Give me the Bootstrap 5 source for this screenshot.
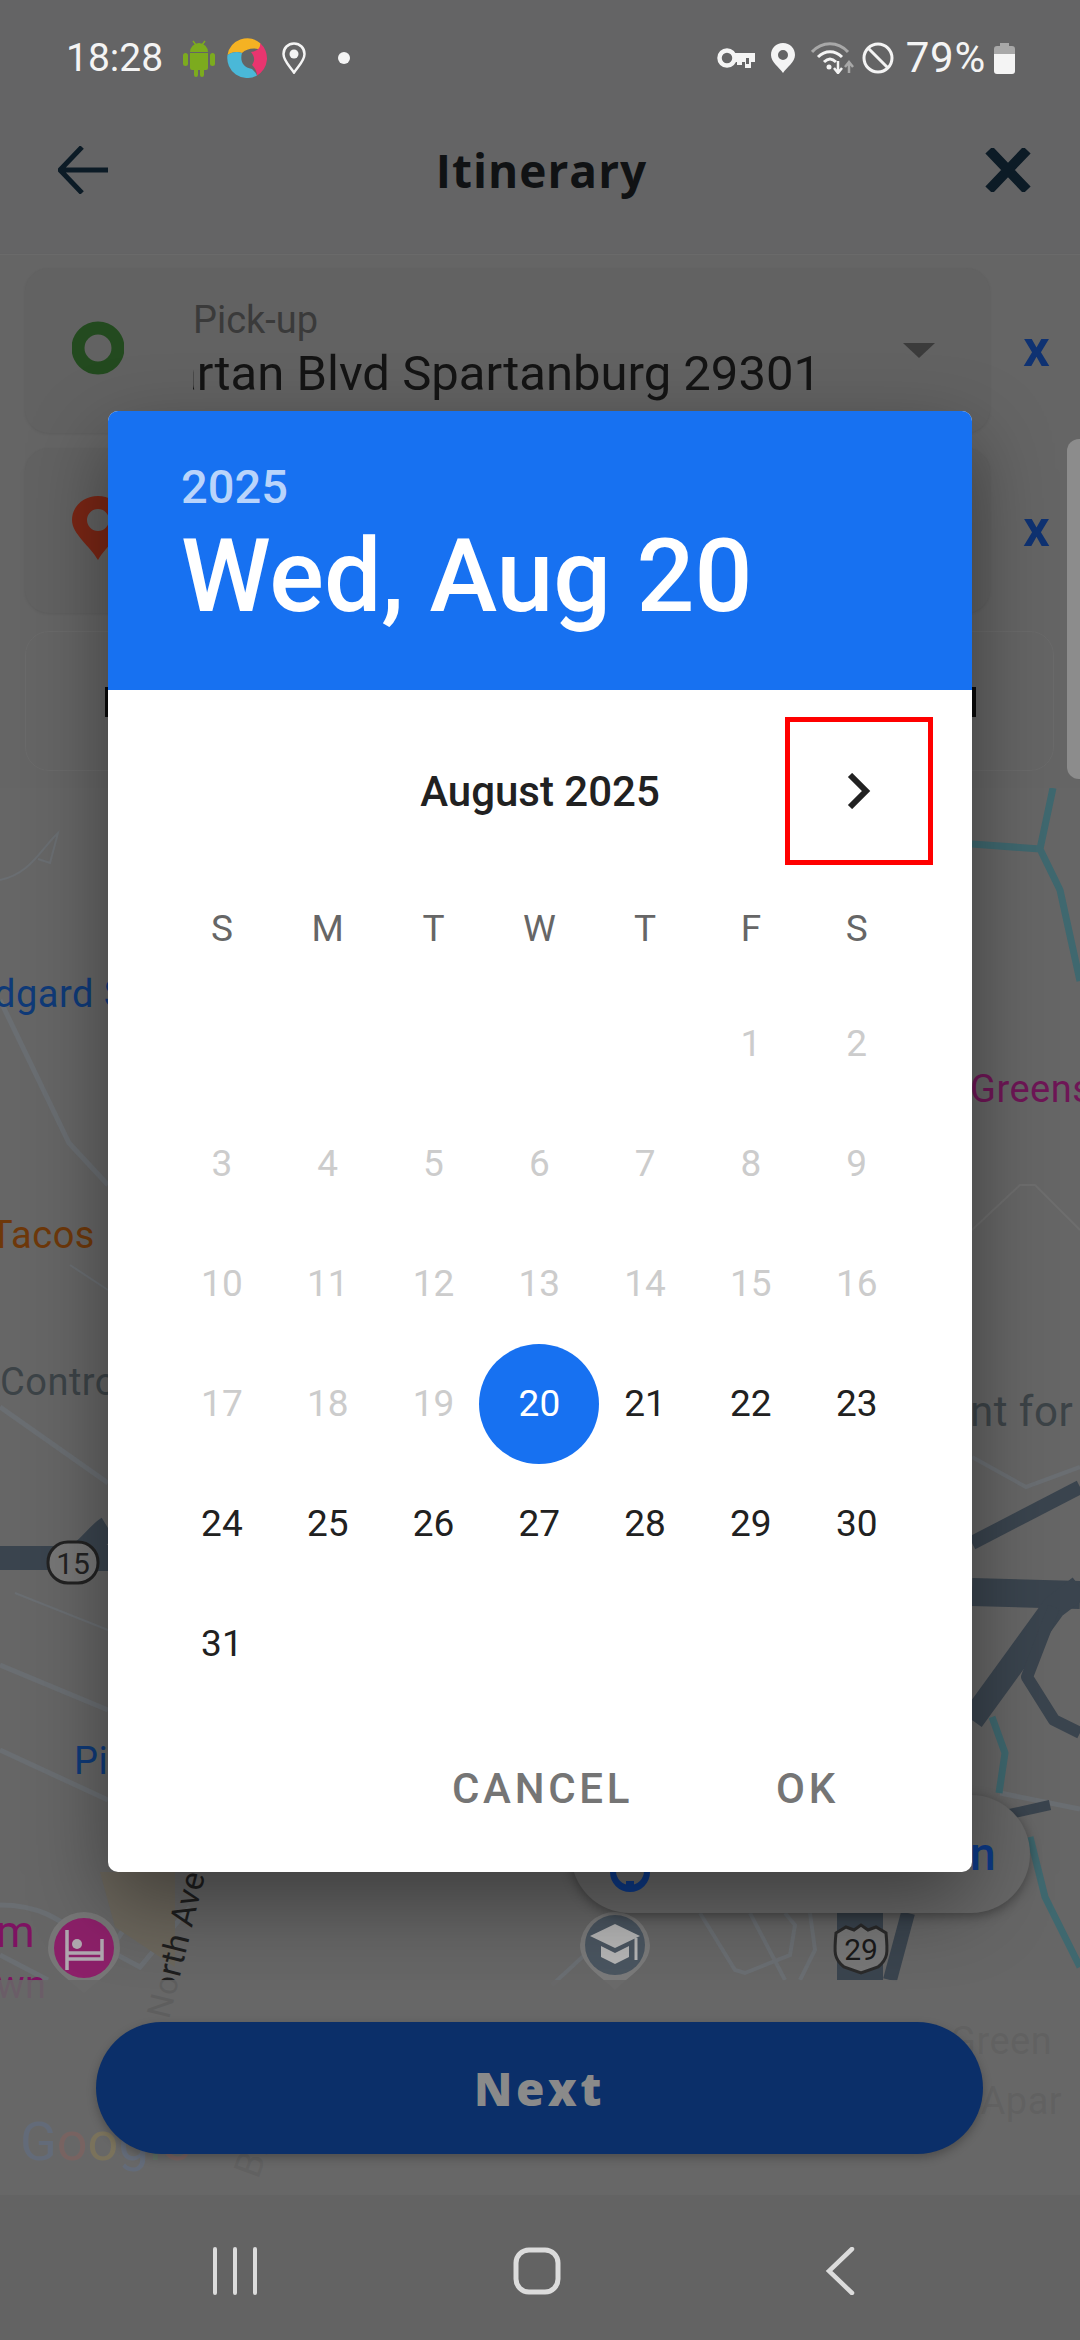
<!DOCTYPE html>
<html lang="en">
<head>
    <meta charset="UTF-8">
    <meta name="viewport" content="width=device-width, initial-scale=1.0">
    <title>Itinerary</title>
    <link href="https://cdn.jsdelivr.net/npm/bootstrap@5.3.0/dist/css/bootstrap.min.css" rel="stylesheet">
    <style>
        body {
            margin: 0;
            background-color: #646465;
            font-family: Roboto, "Liberation Sans", sans-serif;
        }
        .screen {
            width: 1080px;
            height: 2340px;
            overflow: hidden;
        }
        /* status bar */
        .status-bar {
            height: 116px;
            padding: 0 65px 0 66px;
            color: #f4f4f4;
            font-size: 39px;
            line-height: 1;
        }
        .status-pct { font-size: 42px; letter-spacing: 0.8px; margin-left: 12px; }
        /* toolbar */
        .tool-bar {
            height: 138px;
            padding: 0 49px 30px 58px;
        }
        .tool-title {
            font-family: "Open Sans", sans-serif;
            font-weight: 700;
            font-size: 46px;
            letter-spacing: 1px;
            color: #101214;
            line-height: 1;
            margin-right: 10px;
        }
        /* form panel */
        .form-panel {
            height: 534px;
            padding: 13px 0 0 25px;
            background-color: #656565;
            border-top: 1px solid #6a6a6a;
            box-shadow: 0 2px 3px rgba(0,0,0,.2);
        }
        .field-row { height: 165px; margin-bottom: 15px; }
        .field-box {
            width: 965px;
            height: 100%;
            background-color: #626262;
            border: 0;
            border-radius: 24px;
            box-shadow: 0 1px 3px rgba(0,0,0,.08);
            padding-left: 47px;
        }
        .field-icon { width: 52px; flex: none; margin: 0 69px 6px 0; }
        .field-body { width: 628px; margin-top: -2px; }
        .field-label { font-size: 38px; line-height: 46px; margin-bottom: 3px; color: #3a3a3a; }
        .field-value {
            font-size: 49px;
            line-height: 56px;
            color: #141414;
            white-space: nowrap;
            overflow: hidden;
        }
        .field-caret {
            width: 0;
            height: 0;
            margin: 0 0 0 82px;
            border-left: 16px solid transparent;
            border-right: 16px solid transparent;
            border-top: 15px solid #3b3b3b;
        }
        .field-clear {
            font-family: "Open Sans", sans-serif;
            font-weight: 700;
            font-size: 50px;
            line-height: 1;
            color: #0f3272;
            margin: 0 0 8px 32px;
            transform: scaleX(.9);
        }
        .date-box {
            width: 1029px;
            height: 140px;
            margin-top: 18px;
            background-color: #656565;
            border: 1px solid #6a6a6a;
            border-radius: 24px;
            padding: 55px 0 0 79px;
        }
        .date-line { width: 871px; height: 30px; background-color: #0a0a0a; }
        .side-tab {
            right: 0;
            top: 184px;
            width: 13px;
            height: 340px;
            background-color: #8c8c8c;
            border-radius: 12px 0 0 12px;
        }
        /* map */
        .map-area { height: 1407px; background-color: #666; }
        .map-svg { left: 0; top: 0; }
        .map-svg text { font-family: Roboto, sans-serif; font-size: 38px; letter-spacing: .5px; }
        .next-panel {
            height: 215px;
            padding: 42px 97px 0 96px;
            background-color: rgba(104,104,104,.88);
        }
        .btn.next-btn {
            height: 132px;
            padding: 0;
            border: 0;
            border-radius: 66px;
            background-color: #0b2f69;
            color: #8a8a8a;
            font-family: "Open Sans", sans-serif;
            font-weight: 800;
            font-size: 46px;
            letter-spacing: 3.5px;
            box-shadow: 0 4px 10px rgba(0,0,0,.25);
        }
        .nav-bar { height: 145px; background-color: #636363; }
        .nav-icon { top: 52px; }
        /* date picker */
        .date-dialog {
            left: 108px;
            top: 411px;
            width: 864px;
            height: 1461px;
            border: 0;
            border-radius: 10px;
            overflow: hidden;
            box-shadow: 0 30px 80px rgba(0,0,0,.4);
        }
        .date-head {
            height: 279px;
            padding: 48px 0 0 73px;
            background-color: #1771f1;
            color: #fff;
        }
        .date-year { font-size: 47px; font-weight: 500; line-height: 56px; color: #b9d4fb; }
        .date-full { font-size: 102px; font-weight: 500; line-height: 122px; }
        .month-row { height: 176px; padding: 27px 39px 0 0; }
        .month-name { top: 349px; font-size: 42px; font-weight: 500; color: #212121; }
        .month-next {
            width: 148px;
            height: 148px;
            border: 5px solid #f00;
        }
        .cal-grid {
            grid-template-columns: repeat(7, 105.8px);
            grid-auto-rows: 120px;
            margin-left: 61px;
            font-size: 37px;
            color: #212121;
            text-align: center;
        }
        .cal-grid span { line-height: 120px; }
        .cal-week { height: 80px; margin-top: 23px; margin-bottom: 15px; font-size: 37px; color: #666; }
        .cal-week span { line-height: 80px; }
        .cal-off { color: #ccc; }
        .cal-on {
            display: block;
            width: 120px;
            margin-left: -7px;
            background-color: #1771f1;
            border-radius: 50%;
            color: #fff;
        }
        .dialog-actions { padding: 0 0 0 344px; margin-top: 53px; }
        .btn.dialog-btn {
            padding: 0;
            border: 0;
            font-size: 42px;
            font-weight: 500;
            letter-spacing: 3.7px;
            color: #757575;
        }
    </style>
</head>
<body>
<div class="screen position-relative d-flex flex-column">

    <!-- status bar -->
    <div class="status-bar d-flex align-items-center justify-content-between flex-shrink-0">
        <div class="d-flex align-items-center">
            <span>18:28</span>
            <svg width="32" height="37" viewBox="0 0 32 37" style="margin-left:20px">
                <path d="M7 12a9 9 0 0 1 18 0zM7 13h18v15a2 2 0 0 1-2 2h-2v5a2 2 0 0 1-4 0v-5h-2v5a2 2 0 0 1-4 0v-5H9a2 2 0 0 1-2-2z" fill="#7cab1e"/>
                <rect x="0" y="13" width="5" height="13" rx="2.5" fill="#7cab1e"/>
                <rect x="27" y="13" width="5" height="13" rx="2.5" fill="#7cab1e"/>
                <path d="M10 1l3 4M22 1l-3 4" stroke="#7cab1e" stroke-width="1.5"/>
            </svg>
            <svg width="40" height="40" viewBox="0 0 40 40" style="margin-left:12px">
                <path d="M0.5 17A20 20 0 0 1 33 5C35 8 37 11 37 13C29 9 20 10 15 15C10 13 5 14 0.5 17z" fill="#f5b223"/>
                <path d="M33 5A20 20 0 0 1 30 37.5C30 33 27 29 25 27C28 23 28 19 24 14C30 13 34 10 33 5z" fill="#e8356f"/>
                <path d="M0.5 17C5 14 10 13 15 15C13 22 15 29 25 31C27 33 29 35 30 37.5A20 20 0 0 1 0.5 17z" fill="#4ab8d8"/>
            </svg>
            <svg width="24" height="32" viewBox="0 0 24 32" style="margin-left:15px">
                <path d="M12 1.5C6 1.5 1.5 6 1.5 12c0 7 7 13 10.5 18.5C15.5 25 22.5 19 22.5 12 22.5 6 18 1.5 12 1.5z" fill="none" stroke="#f4f4f4" stroke-width="2.5"/>
                <circle cx="12" cy="12" r="4.5" fill="#f4f4f4"/>
            </svg>
            <svg width="12" height="12" viewBox="0 0 12 12" style="margin-left:32px"><circle cx="6" cy="6" r="6" fill="#f4f4f4"/></svg>
        </div>
        <div class="d-flex align-items-center">
            <svg width="38" height="20" viewBox="0 0 38 20">
                <circle cx="10" cy="10" r="7.5" fill="none" stroke="#f4f4f4" stroke-width="4.5"/>
                <path d="M17 5h21v9h-4v6h-6v-6h-3v3h-5v-3h-3z" fill="#f4f4f4"/>
                <path d="M29 10h3v6h-3z" fill="#646465"/>
            </svg>
            <svg class="ms-3" width="24" height="30" viewBox="0 0 24 30">
                <path fill-rule="evenodd" d="M12 0C5 0 0 5 0 12c0 7 8 12 12 18 4-6 12-11 12-18C24 5 19 0 12 0zm0 7a5 5 0 1 1 0 10 5 5 0 0 1 0-10z" fill="#f4f4f4"/>
            </svg>
            <svg width="44" height="32" viewBox="0 0 44 32" style="margin-left:16px">
                <path d="M1 10c10-11 26-11 36 0" fill="none" stroke="#a8a8a8" stroke-width="3"/>
                <path d="M7 15c7-7 17-7 24 0M13 20c4-4 8-4 12 0" fill="none" stroke="#f4f4f4" stroke-width="3"/>
                <circle cx="18" cy="25" r="2.5" fill="#f4f4f4"/>
                <path d="M27 19v11M23 26l4 5 4-5" fill="none" stroke="#f4f4f4" stroke-width="2.5"/>
                <path d="M38 31V20M34 25l4-5 4 5" fill="none" stroke="#a8a8a8" stroke-width="2.5"/>
            </svg>
            <svg width="32" height="32" viewBox="0 0 32 32" style="margin-left:7px">
                <circle cx="16" cy="16" r="14" fill="none" stroke="#f4f4f4" stroke-width="3"/>
                <path d="M6 6l20 20" stroke="#f4f4f4" stroke-width="3"/>
            </svg>
            <span class="status-pct">79%</span>
            <svg width="21" height="31" viewBox="0 0 21 31" style="margin-left:8px">
                <path d="M6 0h9v3h3a3 3 0 0 1 3 3v6H0V6a3 3 0 0 1 3-3h3z" fill="#a8a8a8"/>
                <path d="M0 11h21v17a3 3 0 0 1-3 3H3a3 3 0 0 1-3-3z" fill="#f4f4f4"/>
            </svg>
        </div>
    </div>

    <!-- toolbar -->
    <div class="tool-bar d-flex align-items-center justify-content-between flex-shrink-0">
        <svg width="50" height="48" viewBox="0 0 50 48">
            <path d="M24 1L2 24l22 23M2 24h48" fill="none" stroke="#0c1b26" stroke-width="5"/>
        </svg>
        <div class="tool-title">Itinerary</div>
        <svg width="46" height="44" viewBox="0 0 46 44">
            <path d="M4 2l38 40M42 2L4 42" fill="none" stroke="#0c1b26" stroke-width="10"/>
        </svg>
    </div>

    <!-- form -->
    <div class="form-panel position-relative flex-shrink-0">
        <div class="field-row d-flex align-items-center">
            <div class="card field-box flex-row align-items-center flex-shrink-0">
                <svg class="field-icon" height="54" viewBox="0 0 52 54">
                    <circle cx="26" cy="27" r="20" fill="none" stroke="#234a1f" stroke-width="13"/>
                </svg>
                <div class="field-body">
                    <div class="field-label">Pick-up</div>
                    <div class="field-value d-flex justify-content-end">Spartan Blvd Spartanburg 29301</div>
                </div>
                <div class="field-caret"></div>
            </div>
            <div class="field-clear">x</div>
        </div>
        <div class="field-row d-flex align-items-center">
            <div class="card field-box flex-row align-items-center flex-shrink-0">
                <svg class="field-icon" height="64" viewBox="0 0 52 64">
                    <path fill-rule="evenodd" d="M26 0C12 0 0 10 0 24c0 14 18 26 26 40 8-14 26-26 26-40C52 10 40 0 26 0zm0 13a11 11 0 1 1 0 22 11 11 0 0 1 0-22z" fill="#7a2615"/>
                </svg>
            </div>
            <div class="field-clear">x</div>
        </div>
        <div class="date-box">
            <div class="date-line"></div>
        </div>
        <div class="side-tab position-absolute"></div>
    </div>

    <!-- map with the Next panel on top of it -->
    <div class="map-area position-relative d-flex flex-column justify-content-end flex-shrink-0">
        <svg class="map-svg position-absolute" width="1080" height="1407" viewBox="0 788 1080 1407">
            <g fill="none" stroke="#6a6e72">
                <path d="M0 1000l69 143 39 42M0 1407l108 76M0 1665l108 45M0 1750l108 50" stroke-width="5"/>
                <path d="M70 1265l38 25M15 1593l93 37M0 880c30-6 40-30 58-47l-8 30-12-4" stroke-width="2"/>
                <path d="M972 1230l48-45h15l45 45" stroke-width="2" stroke="#6e6e6e"/>
                <path d="M972 1457l54 30 54-20" stroke-width="4"/>
                <path d="M0 1905c40 0 60 15 80 30l60 32 50-60M0 1955l48 25M130 1920l-20 30" stroke-width="5"/>
                <path d="M700 1913l35 57 10 3 45-18 5-30-10-12M750 1913l35 67M810 1913l5 37-15 30M590 1950l-38 35" stroke-width="4"/>
                <path d="M1000 1793l80 16" stroke-width="5"/>
            </g>
            <path d="M100 1872h75v95l-60-40z" fill="#6b665c"/>
            <g fill="none" stroke="#3a444e" stroke-linejoin="round">
                <path d="M0 1558h70c15-2 25-22 38-30" stroke-width="24"/>
                <path d="M70 1558h38" stroke-width="26"/>
                <path d="M972 1543l108-56" stroke-width="14"/>
                <path d="M972 1592l108 3" stroke-width="28"/>
                <path d="M1080 1587l-26 20-82 113" stroke-width="24"/>
                <path d="M1054 1607l-27 70 27 43 26 13" stroke-width="12"/>
                <path d="M1005 1815l45-10" stroke-width="10"/>
                <path d="M860 1913v67" stroke-width="46"/>
                <path d="M908 1913l-18 67" stroke-width="14"/>
            </g>
            <g fill="none" stroke="#3f686f" stroke-width="7" stroke-linejoin="round">
                <path d="M972 844l68 5 13-61M1040 849l20 41 20 91"/>
                <path d="M992 1717l13 36-6 40"/>
                <path d="M1030 1837l15 60 35 70"/>
            </g>
            <text x="-6" y="1007" fill="#0f3a78">dgard S</text>
            <text x="-10" y="1248" fill="#6e380a">Tacos</text>
            <text x="0" y="1395" fill="#3c4347">Control</text>
            <text x="74" y="1774" fill="#0f3a78">Pi</text>
            <text x="970" y="1102" fill="#6e1656">Greens</text>
            <text x="970" y="1426" fill="#3c4347" style="font-size:42px">nt for</text>
            <text x="-4" y="1947" fill="#7e1262" style="font-size:44px">m</text>
            <text x="-4" y="1998" fill="#7e1262">wn</text>
            <text transform="translate(169 2020) rotate(-76)" fill="#1e1e1e" style="font-size:33px;letter-spacing:.5px">North Ave</text>
            <text transform="translate(258 2180) rotate(-70)" fill="#333">Br</text>
            <text x="950" y="2054" fill="#333">Green</text>
            <text x="950" y="2114" fill="#333">e Apar</text>
            <text x="20" y="2160" fill="#4285f4" style="font-size:54px;letter-spacing:0">G<tspan fill="#ea4335">o</tspan><tspan fill="#fbbc05">o</tspan><tspan fill="#4285f4">g</tspan><tspan fill="#34a853">l</tspan><tspan fill="#ea4335">e</tspan></text>
            <!-- route shields -->
            <rect x="48" y="1542" width="50" height="41" rx="20" fill="#777" stroke="#222" stroke-width="3"/>
            <text x="73" y="1574" text-anchor="middle" fill="#222" style="font-size:30px;letter-spacing:0">15</text>
            <path d="M836 1933l10-6 8 3 7-5 7 5 8-3 10 6c2 20 2 26-8 34l-17 6-17-6c-10-8-10-14-8-34z" fill="#777" stroke="#2a2a2a" stroke-width="3"/>
            <text x="861" y="1960" text-anchor="middle" fill="#1a1a1a" style="font-size:30px;letter-spacing:0">29</text>
            <!-- place pins -->
            <path d="M84 1912a36 36 0 0 1 36 36c0 20-20 30-36 45-16-15-36-25-36-45a36 36 0 0 1 36-36z" fill="#777"/>
            <circle cx="84" cy="1948" r="30" fill="#8c2069"/>
            <path d="M67 1930v40M67 1959h35v-20M67 1953h35" fill="none" stroke="#b0a8b0" stroke-width="3.5"/>
            <circle cx="77" cy="1944" r="5" fill="#b0a8b0"/>
            <path d="M615 1912a35 35 0 0 1 35 33c0 20-20 30-35 45-15-15-35-25-35-45a35 35 0 0 1 35-33z" fill="#7a7a7a"/>
            <circle cx="615" cy="1945" r="30" fill="#4a5560"/>
            <path d="M615 1924l-25 12 25 12 25-12zM601 1946v11l14 7 14-7v-11l-14 7z" fill="#b5b5b5"/>
            <path d="M636 1938v22" stroke="#b5b5b5" stroke-width="3"/>
            <!-- search chip -->
            <rect x="571" y="1795" width="459" height="118" rx="59" fill="#676767" style="filter:drop-shadow(0 3px 6px rgba(0,0,0,.35))"/>
            <path d="M610 1872a20 20 0 0 0 40 0v-1h-6a14 14 0 0 1-28 0h-6zM626 1887h8v-6h-8z" fill="#0d3a88"/>
            <text x="970" y="1870" fill="#0d3a88" style="font-size:46px;font-weight:500">n</text>
        </svg>
        <div class="next-panel position-relative">
            <button type="button" class="btn next-btn w-100">Next</button>
        </div>
    </div>

    <!-- android nav bar -->
    <div class="nav-bar position-relative flex-shrink-0">
        <svg class="nav-icon position-absolute" style="left:212px" width="46" height="48" viewBox="0 0 46 48">
            <path d="M3 2v44M23 2v44M43 2v44" stroke="#dcdcdc" stroke-width="4" stroke-linecap="round"/>
        </svg>
        <svg class="nav-icon position-absolute" style="left:513px" width="48" height="48" viewBox="0 0 48 48">
            <rect x="3" y="3" width="42" height="42" rx="13" fill="none" stroke="#dcdcdc" stroke-width="5"/>
        </svg>
        <svg class="nav-icon position-absolute" style="left:825px" width="30" height="48" viewBox="0 0 30 48">
            <path d="M27 2L4 24l23 22" fill="none" stroke="#dcdcdc" stroke-width="4.5" stroke-linecap="round"/>
        </svg>
    </div>

    <!-- date picker dialog -->
    <div class="card date-dialog position-absolute">
        <div class="date-head">
            <div class="date-year">2025</div>
            <div class="date-full">Wed, Aug 20</div>
        </div>
        <div class="month-row d-flex justify-content-end">
            <div class="month-name position-absolute start-50 translate-middle-x">August 2025</div>
            <div class="month-next d-flex align-items-center justify-content-center">
                <svg width="24" height="36" viewBox="0 0 24 36">
                    <path d="M3 2l16 16L3 34" fill="none" stroke="#212121" stroke-width="6"/>
                </svg>
            </div>
        </div>
        <div class="cal-grid cal-week d-grid">
            <span>S</span><span>M</span><span>T</span><span>W</span><span>T</span><span>F</span><span>S</span>
        </div>
        <div class="cal-grid d-grid">
            <span></span><span></span><span></span><span></span><span></span><span class="cal-off">1</span><span class="cal-off">2</span>
            <span class="cal-off">3</span><span class="cal-off">4</span><span class="cal-off">5</span><span class="cal-off">6</span><span class="cal-off">7</span><span class="cal-off">8</span><span class="cal-off">9</span>
            <span class="cal-off">10</span><span class="cal-off">11</span><span class="cal-off">12</span><span class="cal-off">13</span><span class="cal-off">14</span><span class="cal-off">15</span><span class="cal-off">16</span>
            <span class="cal-off">17</span><span class="cal-off">18</span><span class="cal-off">19</span><span class="cal-on">20</span><span>21</span><span>22</span><span>23</span>
            <span>24</span><span>25</span><span>26</span><span>27</span><span>28</span><span>29</span><span>30</span>
            <span>31</span>
        </div>
        <div class="dialog-actions d-flex">
            <button type="button" class="btn dialog-btn">CANCEL</button>
            <button type="button" class="btn dialog-btn" style="margin-left:143px">OK</button>
        </div>
    </div>
</div>
<script src="https://cdn.jsdelivr.net/npm/bootstrap@5.3.0/dist/js/bootstrap.bundle.min.js"></script>
</body>
</html>
